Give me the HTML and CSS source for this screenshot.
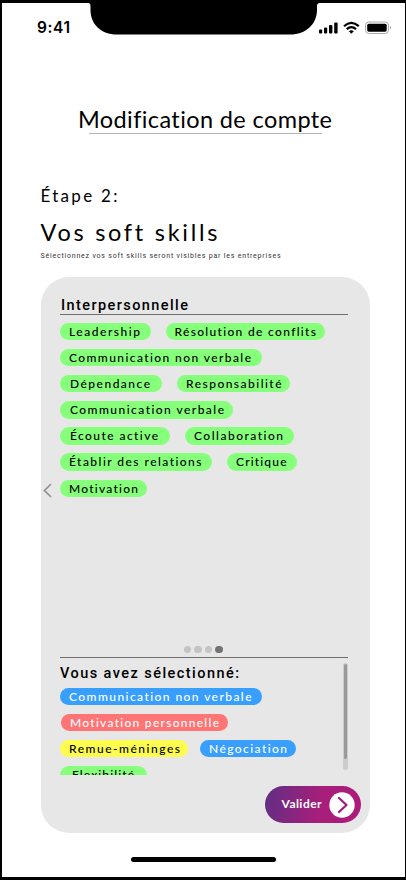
FILE: index.html
```html
<!DOCTYPE html>
<html lang="fr">
<head>
<meta charset="utf-8">
<title>Modification de compte</title>
<link rel="stylesheet" href="styles.css">
</head>
<body>
<div class="phone">
  <svg class="notch" width="232" height="35" viewBox="0 0 232 35"><path d="M0 0H232V3Q229 3 229 6V10C229 24 218 34.500 202 34.500H29C13 34.500 2.500 24 2.500 10V6Q2.500 3 0 3Z"/></svg>
  <header class="status">
    <span class="time" data-width="33">9:41</span>
    <svg width="73" height="14" viewBox="0 0 73 14">
      <g fill="#000"><rect x="0" y="8.500" width="3.200" height="4" rx="1"/><rect x="5" y="6.500" width="3.200" height="6" rx="1"/><rect x="10" y="4" width="3.400" height="8.500" rx="1"/><rect x="15.200" y="1.500" width="3.400" height="11" rx="1"/></g>
      <g fill="none" stroke="#000" stroke-width="2.200"><path d="M25 5.200Q32.300-1.300 39.800 5.200"/><path d="M27.700 8.200Q32.300 4.200 37 8.200"/></g>
      <path d="M29.900 10.200Q32.300 8.300 34.800 10.200L32.300 12.700Z"/>
      <rect x="46.500" y="1" width="23" height="11.500" rx="3.300" fill="#fff" stroke="#aaa"/><rect x="48.200" y="2.700" width="19.500" height="8" rx="1.600"/><path d="M71 5Q73.500 6.700 71 8.500Z" fill="#aaa"/>
    </svg>
  </header>

  <h1><span data-width="254">Modification de compte</span></h1>
  <p class="step"><span data-width="77">Étape 2:</span></p>
  <h2><span data-width="177">Vos soft skills</span></h2>
  <p class="hint"><span data-width="240">Sélectionnez vos soft skills seront visibles par les entreprises</span></p>

  <main class="card">
    <svg class="previous" width="9" height="15" viewBox="0 0 9 15"><path d="M8 1L1.500 7.500L8 14"/></svg>
    <section class="available">
      <h3><span data-width="127">Interpersonnelle</span></h3>
      <div class="chips">
        <div class="row"><span class="chip roomy"><span data-width="71">Leadership</span></span><span class="chip"><span data-width="141.500">Résolution de conflits</span></span></div>
        <div class="row"><span class="chip roomy"><span data-width="182">Communication non verbale</span></span></div>
        <div class="row"><span class="chip inset roomy"><span data-width="80">Dépendance</span></span><span class="chip"><span data-width="95.500">Responsabilité</span></span></div>
        <div class="row"><span class="chip inset"><span data-width="154">Communication verbale</span></span></div>
        <div class="row"><span class="chip inset roomy"><span data-width="88">Écoute active</span></span><span class="chip roomy"><span data-width="89">Collaboration</span></span></div>
        <div class="row"><span class="chip roomy"><span data-width="132.500">Établir des relations</span></span><span class="chip roomy"><span data-width="50.500">Critique</span></span></div>
        <div class="row"><span class="chip"><span data-width="69">Motivation</span></span></div>
      </div>
      <div class="dots"><i></i><i></i><i></i><i class="current"></i></div>
    </section>
    <section class="selected">
      <div class="list">
        <h3><span data-width="179">Vous avez sélectionné:</span></h3>
        <div class="chips">
          <div class="row"><span class="chip blue roomy"><span data-width="182.500">Communication non verbale</span></span></div>
          <div class="row shifted"><span class="chip red"><span data-width="149">Motivation personnelle</span></span></div>
          <div class="row close"><span class="chip yellow"><span data-width="111">Remue-méninges</span></span><span class="chip blue"><span data-width="78">Négociation</span></span></div>
          <div class="row"><span class="chip last"><span data-width="62">Flexibilité</span></span></div>
        </div>
      </div>
      <div class="scrollbar"><div class="thumb"></div></div>
    </section>
    <button class="submit"><span data-width="40">Valider</span><svg width="26" height="26" viewBox="0 0 26 26"><circle cx="13" cy="13" r="12.700" fill="#fff"/><path d="M10 6L17.500 13L10 20" fill="none" stroke="#a01f7d" stroke-width="2.300" stroke-linecap="round" stroke-linejoin="round"/></svg></button>
  </main>
  <div class="home"></div>
</div>
<script src="fit.js"></script>
</body>
</html>
```
FILE: styles.css
```css
* { box-sizing: border-box; }
body { margin: 0; background: #000; color: #000; font-family: Lato, "Liberation Sans", sans-serif; }
h1, h2, h3, p { margin: 0; font-weight: 400; white-space: nowrap; }
[data-width] { display: inline-block; white-space: nowrap; font-variant-ligatures: none; }
.phone { position: relative; width: 406px; height: 880px; border: solid #000; border-width: 3px 1px 3px 2px; background: #fff; overflow: hidden; display: flex; flex-direction: column; }
.notch { position: absolute; left: 86px; top: -3px; }
.status { height: 46px; padding: 15px 13px 0 35px; display: flex; justify-content: space-between; align-items: flex-start; }
.status svg { margin-top: 2.500px; }
.time { font: 600 15.500px/20px Inter, sans-serif; }
h1 { height: 34px; margin: 51px 83px 0 87px; border-bottom: 1px solid #b5b5b5; padding: 5px 0 0; font-size: 23.500px; line-height: 28px; }
h1 span { margin-left: -11px; }
.step { margin: 51px 0 0 38.500px; font-size: 17px; line-height: 22px; height: 22px; }
h2 { margin: 10px 0 0 38.500px; font-size: 23.500px; line-height: 30px; height: 30px; }
.hint { margin: 4px 0 0 38.500px; font: 7px/10px Roboto, sans-serif; height: 10px; color: #333; }
.card { position: relative; width: 329px; height: 556px; margin: 16px 0 0 38.500px; border-radius: 28px; background: #e7e7e7; padding: 20px 22px 0 19.500px; }
.previous { position: absolute; left: 2px; top: 206px; fill: none; stroke: #929292; stroke-width: 1.700; }
.available { height: 360.500px; border-bottom: 1.500px solid #6c6f6c; display: flex; flex-direction: column; }
h3 { font: 500 14.500px/18px Roboto, sans-serif; height: 18px; }
.available h3 { border-bottom: 1.500px solid #6c6f6c; padding-left: 1px; }
.chips { display: flex; flex-direction: column; gap: 8.700px; margin-top: 7.500px; }
.row { display: flex; gap: 15px; height: 17.500px; }
.row.close { gap: 12px; }
.row.shifted { margin-left: 1px; }
.chip { display: flex; padding: 0 8.500px 0 9px; height: 17.500px; border-radius: 9px; background: #86ff7b; font-size: 12px; line-height: 18px; font-weight: 500; }
.chip.roomy { padding-right: 10.500px; }
.chip.inset { padding-left: 10px; padding-right: 9px; }
.chip.inset.roomy { padding-right: 12px; }
.chip.blue { background: #389fff; color: #fff; }
.chip.red { background: #ff7474; color: #fff; }
.chip.yellow { background: #fffc50; padding-right: 8px; }
.chip.last { padding: 0 13px 0 12px; }
.dots { display: flex; gap: 3.300px; margin: auto 0 3.500px 124px; }
.dots i { width: 7.200px; height: 7.200px; border-radius: 50%; background: #c4c4c4; }
.dots .current { background: #737373; }
.selected { display: flex; justify-content: space-between; height: 117px; }
.list { flex: 1; overflow: hidden; padding-top: 7px; }
.selected .chips { margin-top: 5px; }
.scrollbar { width: 5px; height: 107px; margin-top: 5.500px; border-radius: 3px; background: #ccc; padding: 1px; }
.thumb { width: 3px; height: 95px; border-radius: 2px; background: #999; }
.submit { position: absolute; left: 224.500px; top: 509px; width: 95.500px; height: 37px; border: 0; border-radius: 19px; padding: 0 6px 0 16.500px; display: flex; align-items: center; justify-content: space-between; background: linear-gradient(100deg, #662d83 5%, #a81e7b 58%, #ad1b7b); color: #fff; font: 700 12px/18px Lato, sans-serif; }
.submit span { margin-top: -2px; }
.home { width: 145px; height: 5.500px; border-radius: 3px; background: #000; margin: 23.500px 0 0 129px; }
```
FILE: fit.js
```js
// Adjust tracking so that each label fills its data-width.
document.querySelectorAll('[data-width]').forEach(function (label) {
  var target = parseFloat(label.dataset.width);
  var gaps = label.textContent.length - 1;
  var spacing = (target - label.getBoundingClientRect().width) / gaps;
  label.style.letterSpacing = spacing + 'px';
  label.style.width = target + 'px';
});
```
